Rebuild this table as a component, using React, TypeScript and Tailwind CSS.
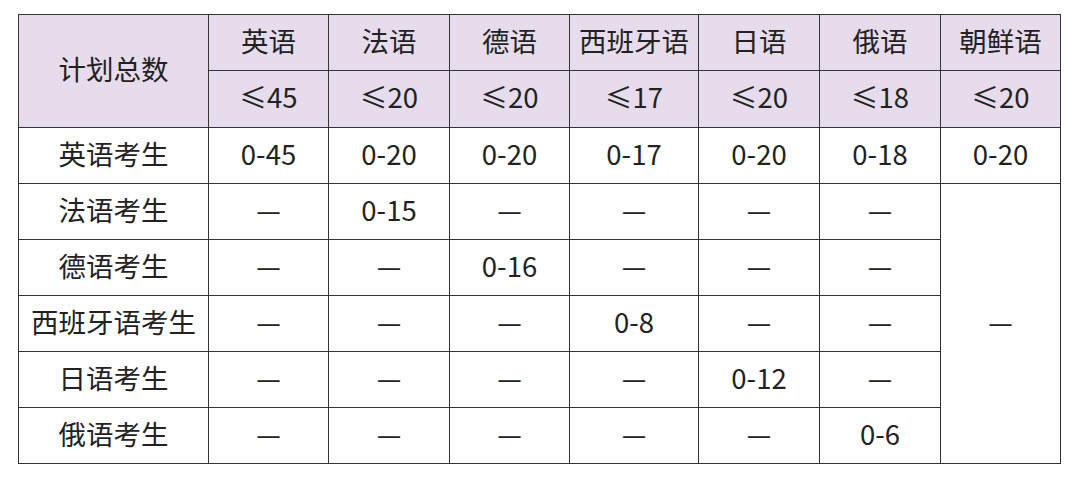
import React from "react";

const langs = ["英语", "法语", "德语", "西班牙语", "日语", "俄语", "朝鲜语"];
const limits = ["≤45", "≤20", "≤20", "≤17", "≤20", "≤18", "≤20"];
const widths = [190, 120, 121, 120, 129, 121, 121, 120];

const rows: { label: string; cells: string[] }[] = [
  { label: "法语考生", cells: ["—", "0-15", "—", "—", "—", "—"] },
  { label: "德语考生", cells: ["—", "—", "0-16", "—", "—", "—"] },
  { label: "西班牙语考生", cells: ["—", "—", "—", "0-8", "—", "—"] },
  { label: "日语考生", cells: ["—", "—", "—", "—", "0-12", "—"] },
  { label: "俄语考生", cells: ["—", "—", "—", "—", "—", "0-6"] },
];

const cell = "border border-[#333] text-center align-middle p-0 pb-[4px]";

export default function App() {
  return (
    <div
      className="w-[1080px] h-[480px] bg-white pl-[18px] pt-[14px] text-[#222] text-[27.5px] leading-none"
      style={{ fontFamily: '"Noto Sans CJK SC", "Noto Sans", sans-serif' }}
    >
      <table className="border-collapse table-fixed w-[1043px]">
        <colgroup>
          {widths.map((w, i) => (
            <col key={i} style={{ width: w }} />
          ))}
        </colgroup>
        <tbody>
          <tr className="h-[56px] bg-[#e6dcec]">
            <td className={cell} rowSpan={2}>
              计划总数
            </td>
            {langs.map((l) => (
              <td key={l} className={cell}>
                {l}
              </td>
            ))}
          </tr>
          <tr className="h-[57px] bg-[#e6dcec]">
            {limits.map((l, i) => (
              <td key={i} className={cell}>
                {l}
              </td>
            ))}
          </tr>
          <tr className="h-[56px]">
            <td className={cell}>英语考生</td>
            {["0-45", "0-20", "0-20", "0-17", "0-20", "0-18", "0-20"].map((v, i) => (
              <td key={i} className={cell}>
                {v}
              </td>
            ))}
          </tr>
          {rows.map((r, ri) => (
            <tr key={r.label} className="h-[56px]">
              <td className={cell}>{r.label}</td>
              {r.cells.map((v, i) => (
                <td key={i} className={cell}>
                  {v}
                </td>
              ))}
              {ri === 0 && (
                <td className={cell} rowSpan={5}>
                  —
                </td>
              )}
            </tr>
          ))}
        </tbody>
      </table>
    </div>
  );
}
